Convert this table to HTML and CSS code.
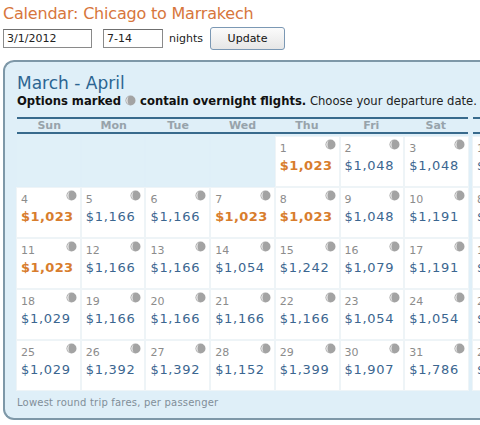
FILE: index.html
```html
<!DOCTYPE html>
<html lang="en">

<head>
    <meta charset="UTF-8">
    <title>Calendar: Chicago to Marrakech</title>
    <link rel="stylesheet" href="styles.css">
</head>

<body>
    <div class="page">
        <h1 class="title">Calendar: Chicago to Marrakech</h1>

        <form class="search">
            <input class="field date" type="text" value="3/1/2012">
            <input class="field nights" type="text" value="7-14">
            <span class="label">nights</span>
            <button class="update" type="button">Update</button>
        </form>

        <div class="panel">
            <h2 class="months">March - April</h2>
            <p class="legend"><strong>Options marked <span class="moon"></span> contain overnight flights.</strong> Choose your departure date.</p>

            <div class="months-row">
                <div class="month" id="march"></div>
                <div class="month" id="april"></div>
            </div>

            <p class="note">Lowest round trip fares, per passenger</p>
        </div>
    </div>

    <script>
        const moonSvg = '<svg width="11" height="11" viewBox="0 0 11 11"><circle cx="5.5" cy="5.5" r="5" fill="#a3a3a3"/><path d="M5.5 1.2 A4.3 4.3 0 0 0 5.5 9.8 A3 4.3 0 0 1 5.5 1.2 Z" fill="#eeeeee"/></svg>';

        // null = empty cell, [day, price, cheapest]
        const march = [
            null, null, null, null, [1, '1,023', true], [2, '1,048'], [3, '1,048'],
            [4, '1,023', true], [5, '1,166'], [6, '1,166'], [7, '1,023', true], [8, '1,023', true], [9, '1,048'], [10, '1,191'],
            [11, '1,023', true], [12, '1,166'], [13, '1,166'], [14, '1,054'], [15, '1,242'], [16, '1,079'], [17, '1,191'],
            [18, '1,029'], [19, '1,166'], [20, '1,166'], [21, '1,166'], [22, '1,166'], [23, '1,054'], [24, '1,054'],
            [25, '1,029'], [26, '1,392'], [27, '1,392'], [28, '1,152'], [29, '1,399'], [30, '1,907'], [31, '1,786']
        ];

        const april = [
            [1, '1,048'], null, null, null, null, null, null,
            [8, '1,191'], null, null, null, null, null, null,
            [15, '1,166'], null, null, null, null, null, null,
            [22, '1,054'], null, null, null, null, null, null,
            [29, '1,392'], null, null, null, null, null, null
        ];

        const days = ['Sun', 'Mon', 'Tue', 'Wed', 'Thu', 'Fri', 'Sat'];

        function buildMonth(el, cells) {
            let html = '<div class="weekdays">';
            days.forEach(d => html += `<span>${d}</span>`);
            html += '</div><div class="grid">';

            cells.forEach(c => {
                if (!c) {
                    html += '<div class="cell empty"></div>';
                    return;
                }
                html += `
                    <div class="cell">
                        <span class="day">${c[0]}</span>
                        <span class="icon">${moonSvg}</span>
                        <span class="price ${c[2] ? 'low' : ''}">$${c[1]}</span>
                    </div>`;
            });

            html += '</div>';
            el.innerHTML = html;
        }

        buildMonth(document.getElementById('march'), march);
        buildMonth(document.getElementById('april'), april);
        document.querySelector('.moon').innerHTML = moonSvg;
    </script>
</body>
</html>
```

FILE: styles.css
```css
body, html {
    margin: 0;
    padding: 0;
    overflow: hidden;
    background: #fff;
    font-family: "DejaVu Sans", Verdana, sans-serif;
}

.page {
    padding: 4px 0 0 3px;
}

.title {
    margin: 0;
    font-size: 16px;
    font-weight: normal;
    color: #d7763c;
    letter-spacing: -0.2px;
    line-height: 20px;
}

.search {
    display: flex;
    align-items: center;
    margin-top: 3px;
    height: 22px;
}

.field {
    box-sizing: border-box;
    height: 19px;
    border: 1px solid #8a8a8a;
    border-top-color: #6f6f6f;
    padding: 0 3px;
    font-family: "DejaVu Sans", Verdana, sans-serif;
    font-size: 11px;
    color: #222;
}

.field.date {
    width: 89px;
}

.field.nights {
    width: 60px;
    margin-left: 11px;
}

.label {
    font-size: 11px;
    color: #222;
    margin-left: 6px;
}

.update {
    width: 75px;
    height: 23px;
    margin-left: 7px;
    border: 1px solid #7b98b4;
    border-radius: 3px;
    background: linear-gradient(#fbfbfb, #e6e6e6);
    font-family: "DejaVu Sans", Verdana, sans-serif;
    font-size: 11px;
    color: #111;
}

.panel {
    width: 980px;
    margin-top: 11px;
    padding: 10px 0 10px 12px;
    background: #dfeff8;
    border: 2px solid #7e98a8;
    border-right: none;
    border-radius: 11px 0 0 11px;
}

.months {
    margin: 0;
    font-size: 17px;
    font-weight: normal;
    color: #2c6592;
    line-height: 22px;
}

.legend {
    margin: 0;
    font-size: 11.6px;
    color: #222;
    line-height: 14px;
    white-space: nowrap;
}

.legend strong {
    color: #111;
}

.moon svg {
    vertical-align: -1px;
}

.months-row {
    display: flex;
    gap: 5px;
    margin-top: 9px;
}

.month {
    width: 451px;
}

.weekdays {
    display: grid;
    grid-template-columns: repeat(7, 1fr);
    border-top: 2px solid #386a8c;
    border-bottom: 2px solid #386a8c;
    height: 13px;
    font-size: 11px;
    line-height: 13px;
    font-weight: bold;
    color: #97a3ab;
    text-align: center;
}

.grid {
    display: grid;
    grid-template-columns: repeat(7, 1fr);
    gap: 2px;
    margin-top: 3px;
}

.cell {
    position: relative;
    height: 49px;
    background: #fff;
    box-shadow: 0 0 0 1px #eef4f7;
}

.cell.empty {
    background: #e0f0f8;
    box-shadow: none;
}

.day {
    position: absolute;
    left: 4px;
    top: 5px;
    font-size: 11px;
    color: #8c8c8c;
}

.icon {
    position: absolute;
    right: 3px;
    top: 2px;
    line-height: 0;
}

.price {
    position: absolute;
    left: 4px;
    top: 21px;
    font-size: 13px;
    letter-spacing: 0.7px;
    color: #3b6690;
}

.price.low {
    color: #d87d2d;
    font-weight: bold;
    letter-spacing: 0.4px;
}

.note {
    margin: 7px 0 0;
    font-size: 10px;
    color: #7f8e99;
    letter-spacing: 0.2px;
}
```
